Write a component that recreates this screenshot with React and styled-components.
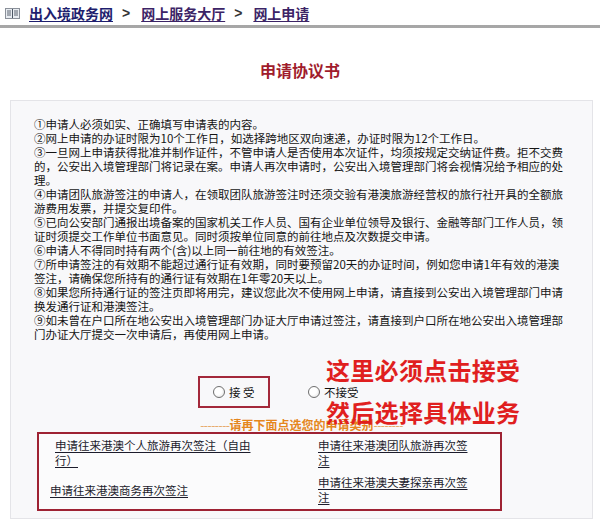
import React from 'react';
import styled, { createGlobalStyle } from 'styled-components';

const Global = createGlobalStyle`
  html, body { margin: 0; padding: 0; background: #fff; }
  body { font-family: "Noto Sans CJK SC", "Liberation Sans", sans-serif; }
`;

const Page = styled.div`
  width: 600px;
  height: 521px;
  overflow: hidden;
  background: #fff;
`;

const Header = styled.div`
  display: flex;
  align-items: center;
  height: 26px;
  padding-left: 5px;
`;

const Crumb = styled.a`
  font-size: 14px;
  font-weight: bold;
  line-height: 16px;
  color: ${p => (p.$first ? '#1e1e6e' : '#3c2466')};
  text-decoration: underline;
  text-underline-offset: 2px;
  margin-left: ${p => (p.$first ? '9px' : '0')};
`;

const Sep = styled.span`
  font-family: "Liberation Sans", sans-serif;
  font-size: 14px;
  font-weight: bold;
  color: #333;
  margin: 0 11px 0 9px;
`;

const Dotted = styled.div`
  height: 3px;
  margin-top: -1px;
  background-image: radial-gradient(circle, #9a9a9a 0.6px, transparent 0.8px);
  background-size: 2px 1.5px;
`;

const Title = styled.h1`
  margin: 32px 0 0;
  height: 20px;
  line-height: 20px;
  text-align: center;
  font-size: 16px;
  font-weight: bold;
  color: #a01c2c;
`;

const Panel = styled.div`
  margin: 20px 7px 0 10px;
  border: 1px solid #e4e4e8;
  background: #f8f8fa;
  padding: 16px 0 7px;
`;

const Terms = styled.div`
  width: 532px;
  margin-left: 23px;
  font-size: 11.5px;
  line-height: 14px;
  color: #151515;
`;

const Term = styled.p`
  margin: 0;
`;

const AcceptArea = styled.div`
  position: relative;
  margin-top: 35px;
`;

const RadioRow = styled.div`
  display: flex;
  align-items: center;
  padding-left: 187px;
  gap: 38px;
`;

const Choice = styled.label`
  display: flex;
  align-items: center;
  gap: 4px;
  font-size: 11.5px;
  color: #111;
  box-sizing: border-box;
  height: ${p => (p.$boxed ? '32px' : 'auto')};
  width: ${p => (p.$boxed ? '72px' : 'auto')};
  padding-left: ${p => (p.$boxed ? '13px' : '0')};
  border: ${p => (p.$boxed ? '2px solid #a3283a' : 'none')};
`;

const Radio = styled.span`
  width: 10px;
  height: 10px;
  border-radius: 50%;
  border: 1px solid #6f6f6f;
  background: radial-gradient(circle at 40% 40%, #fff 40%, #ddd 100%);
  flex: none;
`;

const Annotation = styled.div`
  position: absolute;
  left: 315px;
  top: -17px;
  display: flex;
  flex-direction: column;
  gap: 20px;
  font-size: 24px;
  font-weight: bold;
  line-height: 22px;
  letter-spacing: 0.3px;
  color: #e01f1f;
  pointer-events: none;
`;

const CategoryHead = styled.div`
  margin-top: 10px;
  text-align: center;
  font-size: 12px;
  line-height: 13px;
  font-weight: bold;
  color: #e5861c;
  white-space: nowrap;
`;

const Dashes = styled.span`
  font-weight: normal;
  color: #e6a35a;
  letter-spacing: -0.5px;
`;

const LinkBox = styled.div`
  box-sizing: border-box;
  margin: 1px 0 0 26px;
  width: 465px;
  height: 79px;
  border: 2px solid #9e2233;
  background: #fbfbfc;
  display: grid;
  grid-template-columns: 279px 1fr;
  grid-template-rows: 1fr 1fr;
  align-items: center;
`;

const Cell = styled.div`
  padding-left: ${p => p.$indent}px;
`;

const Link = styled.a`
  display: block;
  max-width: ${p => p.$max}px;
  font-size: 11.5px;
  line-height: 15px;
  color: #1c1c2c;
  text-decoration: underline;
  text-underline-offset: 2px;
`;

const BookIcon = () => (
  <svg width="15" height="11" viewBox="0 0 15 11">
    <rect x="0.5" y="0.5" width="14" height="10" fill="#e9edf2" stroke="#8a9099" />
    <line x1="7.5" y1="1" x2="7.5" y2="10" stroke="#4a5563" strokeWidth="1" />
    <line x1="2" y1="3" x2="6" y2="3" stroke="#5c6470" />
    <line x1="2" y1="5" x2="6" y2="5" stroke="#5c6470" />
    <line x1="2" y1="7" x2="6" y2="7" stroke="#5c6470" />
    <line x1="9" y1="3" x2="13" y2="3" stroke="#5c6470" />
    <line x1="9" y1="5" x2="13" y2="5" stroke="#5c6470" />
    <line x1="9" y1="7" x2="13" y2="7" stroke="#5c6470" />
  </svg>
);

const terms = [
  '①申请人必须如实、正确填写申请表的内容。',
  '②网上申请的办证时限为10个工作日，如选择跨地区双向速递，办证时限为12个工作日。',
  '③一旦网上申请获得批准并制作证件，不管申请人是否使用本次证件，均须按规定交纳证件费。拒不交费的，公安出入境管理部门将记录在案。申请人再次申请时，公安出入境管理部门将会视情况给予相应的处理。',
  '④申请团队旅游签注的申请人，在领取团队旅游签注时还须交验有港澳旅游经营权的旅行社开具的全额旅游费用发票，并提交复印件。',
  '⑤已向公安部门通报出境备案的国家机关工作人员、国有企业单位领导及银行、金融等部门工作人员，领证时须提交工作单位书面意见。同时须按单位同意的前往地点及次数提交申请。',
  '⑥申请人不得同时持有两个(含)以上同一前往地的有效签注。',
  '⑦所申请签注的有效期不能超过通行证有效期，同时要预留20天的办证时间，例如您申请1年有效的港澳签注，请确保您所持有的通行证有效期在1年零20天以上。',
  '⑧如果您所持通行证的签注页即将用完，建议您此次不使用网上申请，请直接到公安出入境管理部门申请换发通行证和港澳签注。',
  '⑨如未曾在户口所在地公安出入境管理部门办证大厅申请过签注，请直接到户口所在地公安出入境管理部门办证大厅提交一次申请后，再使用网上申请。',
];

export default function App() {
  return (
    <Page>
      <Global />
      <Header>
        <BookIcon />
        <Crumb $first href="#">出入境政务网</Crumb>
        <Sep>&gt;</Sep>
        <Crumb href="#">网上服务大厅</Crumb>
        <Sep>&gt;</Sep>
        <Crumb href="#">网上申请</Crumb>
      </Header>
      <Dotted />
      <Title>申请协议书</Title>
      <Panel>
        <Terms>
          {terms.map(t => (
            <Term key={t}>{t}</Term>
          ))}
        </Terms>
        <AcceptArea>
          <RadioRow>
            <Choice $boxed>
              <Radio />
              接 受
            </Choice>
            <Choice>
              <Radio />
              不接受
            </Choice>
          </RadioRow>
          <Annotation>
            <span>这里必须点击接受</span>
            <span>然后选择具体业务</span>
          </Annotation>
        </AcceptArea>
        <CategoryHead>
          <Dashes>--------</Dashes>请再下面点选您的申请类别<Dashes>--------</Dashes>
        </CategoryHead>
        <LinkBox>
          <Cell $indent={16}>
            <Link href="#" $max={200}>申请往来港澳个人旅游再次签注（自由行）</Link>
          </Cell>
          <Cell $indent={0}>
            <Link href="#" $max={155}>申请往来港澳团队旅游再次签注</Link>
          </Cell>
          <Cell $indent={11}>
            <Link href="#" $max={200}>申请往来港澳商务再次签注</Link>
          </Cell>
          <Cell $indent={0}>
            <Link href="#" $max={155}>申请往来港澳夫妻探亲再次签注</Link>
          </Cell>
        </LinkBox>
      </Panel>
    </Page>
  );
}
